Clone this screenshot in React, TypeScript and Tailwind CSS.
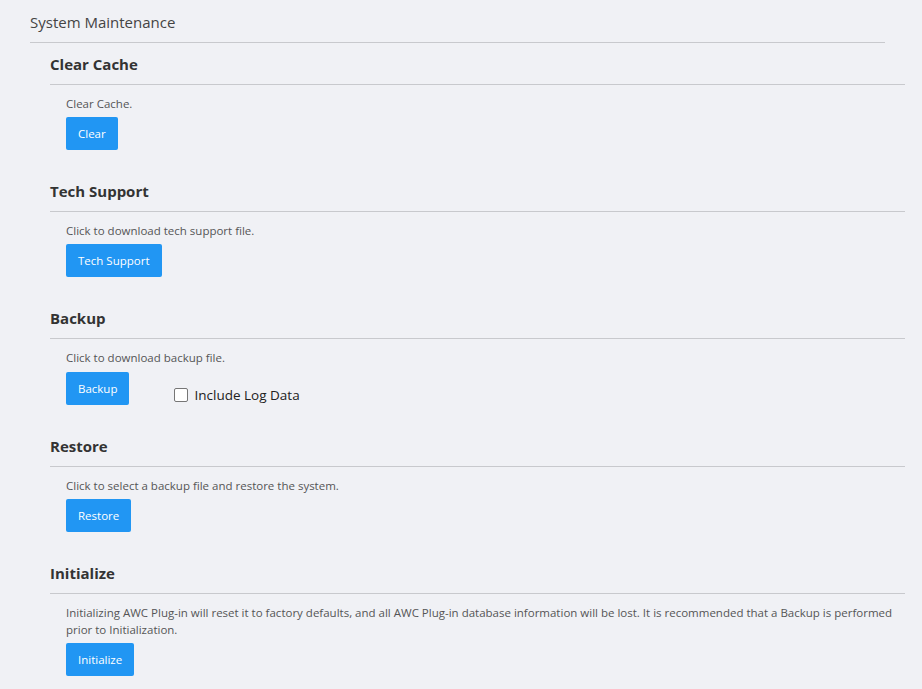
import React from 'react';

interface Section {
  title: string;
  desc: string;
  button: string;
  extra?: boolean;
}

const sections: Section[] = [
  { title: 'Clear Cache', desc: 'Clear Cache.', button: 'Clear' },
  { title: 'Tech Support', desc: 'Click to download tech support file.', button: 'Tech Support' },
  { title: 'Backup', desc: 'Click to download backup file.', button: 'Backup', extra: true },
  { title: 'Restore', desc: 'Click to select a backup file and restore the system.', button: 'Restore' },
  {
    title: 'Initialize',
    desc: 'Initializing AWC Plug-in will reset it to factory defaults, and all AWC Plug-in database information will be lost. It is recommended that a Backup is performed prior to Initialization.',
    button: 'Initialize',
  },
];

const App: React.FC = () => {
  return (
    <div className="min-h-screen bg-[#f0f1f5] font-['Open_Sans',sans-serif] pt-[10px]">
      <div className="ml-[30px] w-[855px] border-b border-[#c8c9cd] pb-[8px]">
        <h1 className="text-[15px] leading-[24px] text-[#444]">System Maintenance</h1>
      </div>

      <div className="ml-[50px] w-[855px]">
        {sections.map((s) => (
          <div key={s.title} className="mt-[9px] mb-[29px]">
            <h2 className="border-b border-[#c8c9cd] pb-[8px] text-[15px] font-bold leading-[24px] text-[#333]">
              {s.title}
            </h2>
            <div className="pl-[16px] pt-[10px]">
              <p className="max-w-[830px] text-[11.5px] leading-[17px] text-[#555]">{s.desc}</p>
              <div className="mt-[5px] flex items-center">
                <button className="h-[33px] rounded-[2px] bg-[#2196f3] px-[12px] text-[11.5px] text-white">
                  {s.button}
                </button>
                {s.extra && (
                  <label className="ml-[45px] mt-[14px] flex items-center gap-[6px] text-[13.5px] text-[#222]">
                    <span className="inline-block h-[14px] w-[14px] rounded-[2px] border border-[#767676] bg-white" />
                    Include Log Data
                  </label>
                )}
              </div>
            </div>
          </div>
        ))}
      </div>
    </div>
  );
};

export default App;
